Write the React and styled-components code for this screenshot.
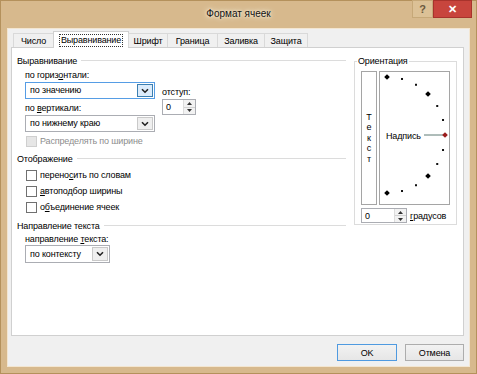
import React from 'react'
import styled, { createGlobalStyle, css } from 'styled-components'

const GlobalStyle = createGlobalStyle`
  html, body { margin: 0; padding: 0; background: #d7b98d; }
  body {
    font-family: "Liberation Sans", Arial, sans-serif;
    font-size: 9px;
    letter-spacing: -0.15px;
    color: #000;
  }
`

const Window = styled.div`
  width: 477px;
  height: 374px;
  box-sizing: border-box;
  background: #d7b98d;
  border: 1px solid #b4915c;
  display: flex;
  flex-direction: column;
`

const TitleBar = styled.div`
  height: 27px;
  flex-shrink: 0;
  display: grid;
  grid-template-columns: 1fr auto 1fr;
  align-items: start;
`

const Title = styled.div`
  grid-column: 2;
  font-size: 10px;
  letter-spacing: 0;
  line-height: 25px;
  color: #111;
  text-shadow: 0 0 6px #fff6e6, 0 0 3px #fff6e6;
`

const Controls = styled.div`
  grid-column: 3;
  justify-self: end;
  display: flex;
  margin-right: 4px;
  margin-top: -1px;
`

const CtlButton = styled.div`
  height: 18px;
  box-sizing: border-box;
  display: flex;
  align-items: center;
  justify-content: center;
  font-weight: bold;
  ${p => p.$close ? css`
    width: 39px;
    background: #c8453d;
    color: #fff;
    font-size: 11px;
    border: 1px solid #a8332c;
  ` : css`
    width: 21px;
    background: #dcc196;
    color: #6c5a3f;
    font-size: 11px;
    border: 1px solid #c6a878;
  `}
`

const Client = styled.div`
  flex: 1;
  margin: 0 6px 6px 6px;
  background: #f0f0f0;
  border: 1px solid #f3e6d1;
  padding: 2px 5px 5px 3px;
  display: flex;
  flex-direction: column;
`

const TabRow = styled.div`
  display: flex;
  align-items: flex-end;
  height: 16px;
  flex-shrink: 0;
  padding-left: 3px;
  position: relative;
  z-index: 1;
`

const Tab = styled.div`
  box-sizing: border-box;
  width: ${p => p.$w + 1}px;
  border: 1px solid #d9d9d9;
  border-bottom: none;
  margin-left: -1px;
  display: flex;
  align-items: center;
  justify-content: center;
  ${p => p.$active ? css`
    height: 17px;
    margin-bottom: -1px;
    background: #fff;
    border-color: #d0d0d0;
  ` : css`
    height: 14px;
    background: #f0f0f0;
  `}
`

const FocusLabel = styled.span`
  outline: 1px dotted #333;
  padding: 0 1px;
  line-height: 11px;
`

const Panel = styled.div`
  height: 289px;
  flex-shrink: 0;
  background: #fff;
  border: 1px solid #d0d0d0;
  box-sizing: border-box;
  display: flex;
  padding: 6px 6px 0 5px;
  gap: 8px;
`

const LeftCol = styled.div`
  width: 330px;
  display: flex;
  flex-direction: column;
`

const GroupHeader = styled.div`
  display: flex;
  align-items: center;
  gap: 4px;
  height: 13px;
  margin-top: ${p => p.$mt || 0}px;
  &::after {
    content: '';
    flex: 1;
    height: 1px;
    background: #dcdcdc;
  }
`

const Indent = styled.div`
  padding-left: 8px;
  display: flex;
  flex-direction: column;
`

const Label = styled.div`
  height: 13px;
  line-height: 13px;
  margin-top: ${p => p.$mt || 0}px;
  u { text-decoration: underline; text-underline-offset: 1px; }
`

const AlignRow = styled.div`
  display: flex;
  gap: 7px;
  margin-top: 2px;
`

const Fields = styled.div`
  display: flex;
  flex-direction: column;
`

const SelectBox = styled.div`
  box-sizing: border-box;
  width: ${p => p.$w}px;
  height: ${p => p.$h || 17}px;
  border: 1px solid ${p => p.$focus ? '#569de5' : '#abadb3'};
  background: #fff;
  display: flex;
  align-items: center;
  padding: 1px;
  margin-top: ${p => p.$mt || 0}px;
`

const SelectText = styled.div`
  flex: 1;
  padding-left: 3px;
  line-height: 13px;
`

const DropBtn = styled.div`
  box-sizing: border-box;
  width: 16px;
  height: 100%;
  display: flex;
  align-items: center;
  justify-content: center;
  border: 1px solid ${p => p.$focus ? '#3c7fb1' : '#c9c9c9'};
  background: ${p => p.$focus ? '#dcecfc' : '#efefef'};
`

const IndentCol = styled.div`
  display: flex;
  flex-direction: column;
  padding-top: 17px;
`

const SpinBox = styled.div`
  box-sizing: border-box;
  width: ${p => p.$w}px;
  height: ${p => p.$h || 16}px;
  border: 1px solid #abadb3;
  background: #fff;
  display: flex;
  align-items: stretch;
`

const SpinText = styled.div`
  flex: 1;
  padding-left: 3px;
  display: flex;
  align-items: center;
`

const SpinBtns = styled.div`
  width: 11px;
  display: flex;
  flex-direction: column;
  border-left: 1px solid #dcdcdc;
  background: #f2f2f2;
`

const SpinHalf = styled.div`
  flex: 1;
  display: flex;
  align-items: center;
  justify-content: center;
  &:first-child { border-bottom: 1px solid #d2d2d2; }
`

const CheckRow = styled.div`
  display: flex;
  align-items: center;
  gap: 3px;
  height: 16px;
  padding-left: 1px;
  margin-top: ${p => p.$mt || 0}px;
  color: ${p => p.$disabled ? '#8d8d8d' : '#000'};
  u { text-decoration: underline; text-underline-offset: 1px; }
`

const Check = styled.div`
  box-sizing: border-box;
  width: 11px;
  height: 11px;
  flex-shrink: 0;
  border: 1px solid ${p => p.$disabled ? '#cfcfcf' : '#707070'};
  background: ${p => p.$disabled ? '#e6e6e6' : '#fff'};
`

const OrientGroup = styled.div`
  position: relative;
  margin-top: 7px;
  width: 103px;
  height: 164px;
  box-sizing: border-box;
  border: 1px solid #dcdcdc;
  padding: 9px 6px 0 6px;
  display: flex;
  flex-direction: column;
`

const OrientLegend = styled.div`
  position: absolute;
  top: -7px;
  left: 2px;
  background: #fff;
  padding: 0 1px;
  line-height: 13px;
`

const OrientBody = styled.div`
  display: flex;
  gap: 2px;
  height: 134px;
`

const VertText = styled.div`
  box-sizing: border-box;
  width: 17px;
  border: 1px solid #a5a5a5;
  display: flex;
  flex-direction: column;
  align-items: center;
  justify-content: center;
  line-height: 10.5px;
`

const Dial = styled.div`
  box-sizing: border-box;
  flex: 1;
  border: 1px solid #a5a5a5;
  display: flex;
`

const DegreeRow = styled.div`
  display: flex;
  align-items: center;
  gap: 3px;
  margin-top: 3px;
  u { text-decoration: underline; text-underline-offset: 1px; }
`

const Footer = styled.div`
  display: flex;
  justify-content: flex-end;
  gap: 8px;
  margin-top: 8px;
`

const Button = styled.div`
  box-sizing: border-box;
  width: ${p => p.$w}px;
  height: 17px;
  display: flex;
  align-items: center;
  justify-content: center;
  background: linear-gradient(#f2f2f2, #e6e6e6);
  border: 1px solid ${p => p.$default ? '#4f9ae0' : '#adadad'};
`

const Chevron = () => (
  <svg width="8" height="6" viewBox="0 0 8 6">
    <path d="M1 1.2 L4 4.2 L7 1.2" fill="none" stroke="#222" strokeWidth="1.6" />
  </svg>
)

const Spin = ({ value, w, h }) => (
  <SpinBox $w={w} $h={h}>
    <SpinText>{value}</SpinText>
    <SpinBtns>
      <SpinHalf>
        <svg width="5" height="3" viewBox="0 0 5 3"><path d="M0 3 L2.5 0 L5 3 Z" fill="#333" /></svg>
      </SpinHalf>
      <SpinHalf>
        <svg width="5" height="3" viewBox="0 0 5 3"><path d="M0 0 L2.5 3 L5 0 Z" fill="#333" /></svg>
      </SpinHalf>
    </SpinBtns>
  </SpinBox>
)

const Select = ({ text, w, h, focus, mt }) => (
  <SelectBox $w={w} $h={h} $focus={focus} $mt={mt}>
    <SelectText>{text}</SelectText>
    <DropBtn $focus={focus}><Chevron /></DropBtn>
  </SelectBox>
)

// orientation dial: center at left edge, points every 15 degrees
const cx = 7, cy = 63, r = 58
const marks = [90, 75, 60, 45, 30, 15, 0, -15, -30, -45, -60, -75, -90].map(a => {
  const rad = (a * Math.PI) / 180
  return { a, x: cx + r * Math.cos(rad), y: cy - r * Math.sin(rad), big: a % 45 === 0 }
})

const DialDrawing = () => (
  <svg width="69" height="131" viewBox="0 0 69 131">
    {marks.map(m =>
      m.a === 0 ? null : m.big ? (
        <rect key={m.a} x={m.x - 2} y={m.y - 2} width="4" height="4" fill="#000" transform={`rotate(45 ${m.x} ${m.y})`} />
      ) : (
        <rect key={m.a} x={m.x - 1} y={m.y - 1} width="2" height="2" fill="#111" />
      )
    )}
    <line x1="44" y1={cy} x2="63" y2={cy} stroke="#5f7a74" strokeWidth="1" />
    <rect x={cx + r - 2} y={cy - 2} width="4" height="4" fill="#9b1c1c" transform={`rotate(45 ${cx + r} ${cy})`} />
    <text x="6" y={cy + 3.5} fontFamily="Liberation Sans, Arial, sans-serif" fontSize="9" fill="#000">Надпись</text>
  </svg>
)

const tabs = [
  ['Число', 40],
  ['Выравнивание', 75],
  ['Шрифт', 39],
  ['Граница', 50],
  ['Заливка', 47],
  ['Защита', 43],
]

export default function App() {
  return (
    <>
      <GlobalStyle />
      <Window>
        <TitleBar>
          <Title>Формат ячеек</Title>
          <Controls>
            <CtlButton>?</CtlButton>
            <CtlButton $close>✕</CtlButton>
          </Controls>
        </TitleBar>
        <Client>
          <TabRow>
            {tabs.map(([t, w]) => (
              <Tab key={t} $w={w} $active={t === 'Выравнивание'}>
                {t === 'Выравнивание' ? <FocusLabel>{t}</FocusLabel> : t}
              </Tab>
            ))}
          </TabRow>
          <Panel>
            <LeftCol>
              <GroupHeader>Выравнивание</GroupHeader>
              <Indent>
                <AlignRow>
                  <Fields>
                    <Label>по гориз<u>о</u>нтали:</Label>
                    <Select text="по значению" w={130} focus />
                    <Label $mt={3}>по <u>в</u>ертикали:</Label>
                    <Select text="по нижнему краю" w={130} />
                  </Fields>
                  <IndentCol>
                    <Label>отступ:</Label>
                    <Spin value="0" w={34} />
                  </IndentCol>
                </AlignRow>
                <CheckRow $disabled $mt={1}>
                  <Check $disabled />
                  <span>Распределять по ширине</span>
                </CheckRow>
              </Indent>
              <GroupHeader $mt={3}>Отображение</GroupHeader>
              <Indent>
                <CheckRow $mt={2}><Check /><span>перено<u>с</u>ить по словам</span></CheckRow>
                <CheckRow><Check /><span><u>а</u>втоподбор ширины</span></CheckRow>
                <CheckRow><Check /><span>о<u>б</u>ъединение ячеек</span></CheckRow>
              </Indent>
              <GroupHeader $mt={4}>Направление текста</GroupHeader>
              <Indent>
                <Label $mt={1}>направление <u>т</u>екста:</Label>
                <Select text="по контексту" w={85} h={18} mt={-1} />
              </Indent>
            </LeftCol>
            <OrientGroup>
              <OrientLegend>Ориентация</OrientLegend>
              <OrientBody>
                <VertText>
                  {'Текст'.split('').map((c, i) => <span key={i}>{c}</span>)}
                </VertText>
                <Dial><DialDrawing /></Dial>
              </OrientBody>
              <DegreeRow>
                <Spin value="0" w={46} h={15} />
                <span><u>г</u>радусов</span>
              </DegreeRow>
            </OrientGroup>
          </Panel>
          <Footer>
            <Button $w={60} $default>OK</Button>
            <Button $w={59}>Отмена</Button>
          </Footer>
        </Client>
      </Window>
    </>
  )
}
